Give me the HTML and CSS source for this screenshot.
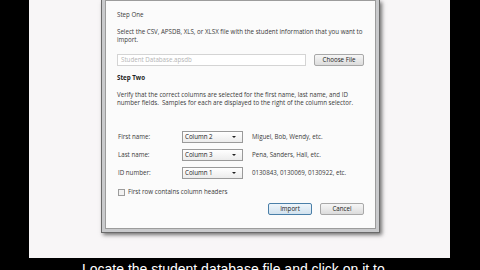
FILE: index.html
```html
<!DOCTYPE html>
<html lang="en">
<head>
    <meta charset="UTF-8">
    <meta name="viewport" content="width=device-width, initial-scale=1.0">
    <title>Import Students</title>
    <link rel="stylesheet" href="styles.css">
</head>
<body>
    <div class="stage">
        <div class="dialog">
            <div class="panel">
                <div class="step-title">Step One</div>
                <p class="hint">Select the CSV, APSDB, XLS, or XLSX file with the student information that you want to import.</p>

                <div class="file-row">
                    <div class="file-input">Student Database.apsdb</div>
                    <div class="btn btn-choose">Choose File</div>
                </div>

                <div class="step-title bold">Step Two</div>
                <p class="hint">Verify that the correct columns are selected for the first name, last name, and ID number fields.&nbsp; Samples for each are displayed to the right of the column selector.</p>

                <div class="fields">
                    <span class="label">First name:</span>
                    <div class="select">Column 2<span class="arrow"></span></div>
                    <span class="sample">Miguel, Bob, Wendy, etc.</span>

                    <span class="label">Last name:</span>
                    <div class="select">Column 3<span class="arrow"></span></div>
                    <span class="sample">Pena, Sanders, Hall, etc.</span>

                    <span class="label">ID number:</span>
                    <div class="select">Column 1<span class="arrow"></span></div>
                    <span class="sample">0130843, 0130069, 0130922, etc.</span>
                </div>

                <div class="check-row">
                    <span class="checkbox"></span>
                    <span>First row contains column headers</span>
                </div>

                <div class="actions">
                    <div class="btn btn-default">Import</div>
                    <div class="btn">Cancel</div>
                </div>
            </div>
        </div>
    </div>
    <div class="caption">Locate the student database file and click on it to</div>
</body>
</html>
```

FILE: styles.css
```css
body {
    margin: 0;
    width: 480px;
    height: 270px;
    overflow: hidden;
    background: #000;
    font-family: 'Liberation Sans', Arial, sans-serif;
}
.stage {
    margin-left: 29px;
    width: 421px;
    height: 258px;
    background: #f8f6f7;
    padding-left: 72px;
    box-sizing: border-box;
}
.dialog {
    width: 279px;
    height: 233px;
    box-sizing: border-box;
    border: 1px solid #6a6a6a;
    border-top: none;
    background: #c9cacc;
    padding: 0 3px 3px 3px;
    box-shadow: 2px 2px 4px rgba(0,0,0,0.55);
}
.panel {
    height: 100%;
    box-sizing: border-box;
    background: #fbfbfb;
    border: 1px solid #9c9c9c;
    padding: 10px 11px 0 11px;
    font-family: 'Open Sans', 'Liberation Sans', sans-serif;
    font-size: 6.2px;
    line-height: 8px;
    color: #3a3a3a;
}
.step-title {
    height: 8px;
}
.bold {
    font-weight: bold;
    color: #222;
}
.hint {
    margin: 9px -2px 0 0;
}
.file-row {
    display: flex;
    justify-content: space-between;
    margin: 10px 0 8px 0;
}
.file-input {
    width: 189px;
    height: 12px;
    box-sizing: border-box;
    border: 1px solid #d4d4d4;
    background: #fff;
    color: #b5b5b5;
    padding-left: 3px;
    line-height: 10px;
}
.btn {
    width: 44px;
    height: 12px;
    box-sizing: border-box;
    border: 1px solid #a8a8a8;
    border-radius: 2px;
    background: linear-gradient(#f6f6f6, #dcdcdc);
    text-align: center;
    line-height: 10px;
    color: #222;
}
.btn-choose {
    width: 50px;
}
.btn-default {
    border-color: #4a7fa8;
    background: linear-gradient(#eef5fb, #d2e2ee);
}
.fields {
    display: grid;
    grid-template-columns: 55px 61px auto;
    column-gap: 9px;
    row-gap: 6px;
    align-items: center;
    margin: 24px 0 0 1px;
}
.select {
    position: relative;
    height: 12px;
    box-sizing: border-box;
    border: 1px solid #9a9a9a;
    background: linear-gradient(#ffffff, #ececec);
    padding-left: 2px;
    line-height: 10px;
    color: #222;
}
.arrow {
    position: absolute;
    right: 6px;
    top: 4px;
    border-left: 2px solid transparent;
    border-right: 2px solid transparent;
    border-top: 2px solid #222;
}
.check-row {
    display: flex;
    align-items: center;
    gap: 3px;
    margin: 9px 0 0 1px;
}
.checkbox {
    width: 7px;
    height: 7px;
    box-sizing: border-box;
    border: 1px solid #9c9c9c;
    background: #f2f2f2;
}
.actions {
    display: flex;
    justify-content: flex-end;
    gap: 8px;
    margin-top: 7px;
}
.caption {
    margin-top: 3px;
    padding-left: 82px;
    color: #fff;
    font-size: 14px;
    line-height: 16px;
    white-space: nowrap;
}
```
